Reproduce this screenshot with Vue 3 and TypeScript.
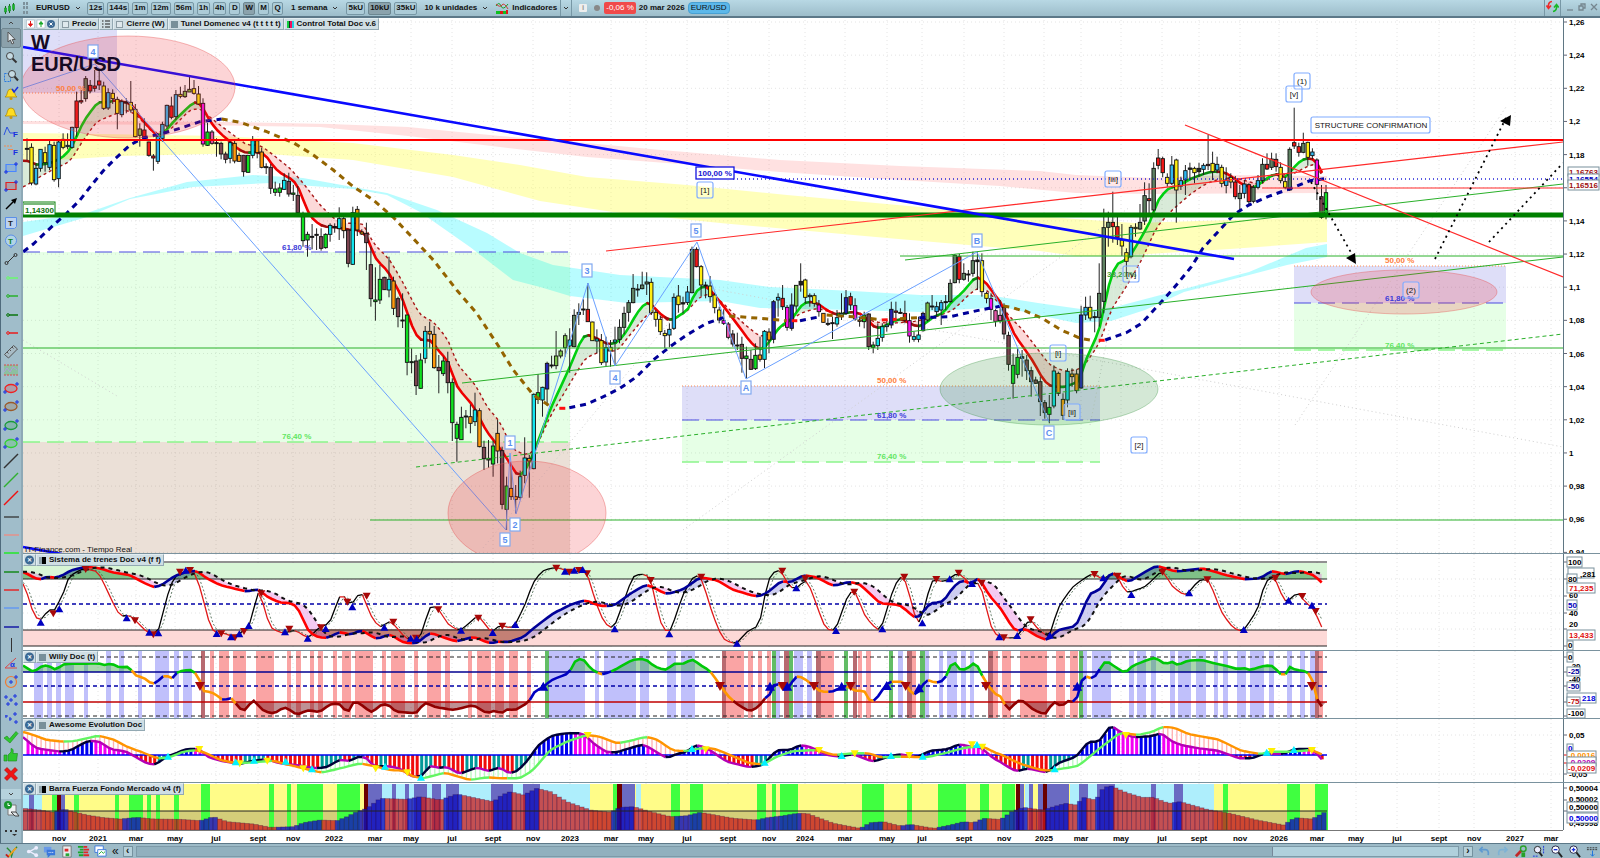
<script setup lang="ts">
type Pt = [number, number]
type Frame = [number, number, number, string]

// Readings are stored per chart sheet: origin x, origin y, horizontal scale, "x y x y ..."
function pts(...frames: Frame[]): Pt[] {
  const out: Pt[] = []
  for (const [ox, oy, sx, raw] of frames) {
    const n = raw.trim().split(/[\s,]+/).map(Number)
    for (let i = 0; i + 1 < n.length; i += 2) out.push([ox + n[i] / sx, oy + n[i + 1] / 3])
  }
  return out.sort((a, b) => a[0] - b[0])
}
const H = 2.613
const STEP = 4.525
const END = 1326

function at(p: Pt[], x: number): number {
  if (x <= p[0][0]) return p[0][1]
  for (let i = 1; i < p.length; i++) {
    if (x <= p[i][0]) {
      const [x0, y0] = p[i - 1]
      const [x1, y1] = p[i]
      return x1 === x0 ? y1 : y0 + ((y1 - y0) * (x - x0)) / (x1 - x0)
    }
  }
  return p[p.length - 1][1]
}
const smooth = (p: Pt[], x: number) => (at(p, x - 3) + at(p, x) * 2 + at(p, x + 3)) / 4
const f = (v: number) => v.toFixed(1)

const xs: number[] = []
for (let x = 23; x <= END; x += STEP) xs.push(x)

interface Run { d: string; c: string }
function runs(p: Pt[], color: (y: number, dy: number) => string): Run[] {
  const out: Run[] = []
  for (let i = 1; i < xs.length; i++) {
    const a = smooth(p, xs[i - 1])
    const b = smooth(p, xs[i])
    const c = color((a + b) / 2, b - a)
    const last = out[out.length - 1]
    if (last && last.c === c) last.d += `L${f(xs[i])} ${f(b)}`
    else out.push({ c, d: `M${f(xs[i - 1])} ${f(a)}L${f(xs[i])} ${f(b)}` })
  }
  return out
}
function between(a: Pt[], b: Pt[], up: string, down: string): Run[] {
  return xs.slice(1).map((x, i) => {
    const p = xs[i]
    const [a0, a1, b0, b1] = [smooth(a, p), smooth(a, x), smooth(b, p), smooth(b, x)]
    return { c: a1 < b1 ? up : down, d: `M${f(p)} ${f(a0)}L${f(x)} ${f(a1)}L${f(x)} ${f(b1)}L${f(p)} ${f(b0)}Z` }
  })
}
const plain = (p: Pt[]) => 'M' + xs.map(x => `${f(x)} ${f(smooth(p, x))}`).join('L')

/* ---------- price candles ---------- */
const tint: Record<string, string> = {
  y: '#ffee10', b: '#2fb8f0', r: '#f01818', g: '#5f8263', l: '#7cc64c', m: '#fb12ee', p: '#e455a8',
  w: '#7c4450', n: '#10e020', c: '#12e4ee', o: '#ff9a0c', d: '#2424b4', k: '#222222',
}
const candleSheets: [number, number, number, string][] = [
  [27, 30, 4.513, `k355 356 325 390;y352 459 340 466;b415 462 400 466;b358 415 358 425;y368 398 350 425;b344 412 330 420;y346 449 335 455;b336 446 330 472;y328 352 310 358;b346 350 310 358;b292 352 290 356;r213 293 185 320;r212 216 180 222;g146 206 138 215;r166 183 150 190;r168 175 120 185;r153 165 118 180;y168 235 155 240;b188 234 175 240;y190 206 178 222;y208 250 200 298;b215 254 208 262;k216 217 205 250;y217 240 153 248;y238 320 222 322;l297 316 280 350;r300 322 265 325;r336 376 335 380;r378 384 372 422;b320 394 312 402;b283 325 275 335;b226 288 224 296;r228 262 200 268;b194 260 180 270;y193 199 170 205;l184 200 165 204;l178 186 140 186;y176 190 150 194;y192 222 168 225;m220 342 205 350;n306 346 278 348;p306 340 300 344;k338 340 325 380;w340 372 335 388;w372 388 365 400;c338 385 328 400;o340 393 328 400;o376 394 368 395;w376 425 378 440;n376 427 376 428;c332 376 318 385;o332 368 332 385;o366 412 353 415;w410 413 400 432;w412 475 402 492;n477 487 455 498;n474 487 460 500;c451 478 430 480;w454 492 428 500;n489 493 465 513;w496 548 468 552`],
  [303, 100, 4.525, `n350 422 335 440;n403 420 395 470;k409 412 372 448;k403 405 385 450;w410 445 385 452;n403 443 400 446;c376 403 370 425;k380 382 370 398;c356 386 322 420;o356 392 345 415;w390 490 390 502;c338 493 320 495;o328 390 318 408;o396 402 388 405;w400 428 368 510;w494 596 440 620;n600 605 502 662;n538 600 495 612;w532 569 530 570;c538 570 470 592;o543 625 530 645;w596 650 590 682;k660 662 580 684;n645 787 645 826;n785 788 745 820;w783 857 765 885;n780 865 760 866;c694 775 678 790;o694 702 665 745;o703 803 678 806;w802 812 765 880;n783 821 770 828;w785 848 755 880;n847 968 835 1023;n973 1015 965 1085;n952 1019 920 1020;k948 950 930 985;o950 970 913 1000;c930 965 878 978;o932 1040 925 1042;w1042 1076 1022 1110;w1075 1080 1020 1103;n1038 1092 1022 1130;o1000 1053 960 1090;w1052 1213 1040 1228;n1158 1228 1130 1290;o1165 1190 1100 1200;o1190 1198 1155 1240;c1130 1192 1112 1200;c1074 1126 1012 1150;o1075 1083 1065 1193;c883 1106 880 1108`],
  [538, 150, 4.53, `n728 748 672 762;c712 750 710 800;d640 717 635 768;k645 647 617 655;l618 647 543 658;l603 618 598 625;l557 593 550 620;c570 588 535 668;g496 590 478 592;g487 493 460 525;k477 480 448 495;r478 515 400 515;y516 572 515 572;c567 573 538 610;y572 638 552 645;c593 636 560 648;y592 603 570 650;c570 576 530 648;g532 568 508 580;g490 532 470 553;g458 487 450 515;g415 458 372 460;k417 418 402 440;g405 416 365 418;g396 402 367 435;y397 488 385 495;y487 508 480 530;y508 545 497 555;y550 557 540 595;b538 555 520 592;b442 535 430 540;y438 464 405 488;k458 462 440 490;b426 458 408 465;g298 428 290 430;r298 350 292 352;y350 405 345 438;k405 408 395 445;y408 440 378 458;y435 473 428 490;y480 510 470 520;m512 520 478 525;p522 562 516 568;w552 582 540 590;w585 588 548 600;w583 625 560 668;n618 626 590 685;w628 658 600 660;n616 656 580 660;o615 628 560 635;c544 628 540 654;o546 570 535 610;d455 568 450 580;b442 450 430 500;r445 470 405 480;m472 532 465 542;d465 535 430 542;l406 468 405 485;k394 405 340 425;y390 442 386 460;b436 440 430 470;y437 460 430 470;m465 485 450 500;o490 517 490 518;k520 522 505 528;k518 520 500 567;c503 522 480 530;b490 500 430 510;d443 490 420 495;r440 465 428 480;m467 507 445 512;o510 514 500 530;n495 515 485 535;w492 590 490 600;n585 592 575 610;c565 587 520 600;c530 562 520 575;b525 530 510 545;d478 525 455 535;r483 487 455 505;k487 488 475 492;r490 510 452 520;m512 558 490 578;c560 568 545 575;c555 568 500 577;d490 542 485 545;l459 510 455 515;k468 470 435 480;b470 485 455 500;b458 480 450 525;k455 457 435 480;g400 455 388 458;g316 398 312 400;r320 388 312 400;g370 388 340 392;k372 374 360 395;g332 370 305 380;k330 335 305 420;y332 425 310 440;y430 445 425 460;m446 478 430 510;p482 514 478 530;p496 512 450 520`],
  [1004, 130, 4.535, `w532 612 520 628;w616 703 605 722;n706 760 670 806;n682 733 655 745;k680 685 660 740;w690 722 675 750;w722 755 710 800;w750 760 740 762;w755 815 740 858;w818 848 810 866;n832 853 795 880;c723 828 706 835;o730 790 725 798;o808 856 790 870;c724 810 715 832;o732 740 715 770;o732 782 718 790;d555 774 527 776;b532 555 500 570;y532 564 497 572;k560 562 545 607;g490 562 400 590;g293 514 236 550;g277 292 245 350;r277 290 185 338;r290 322 252 345;y330 348 282 378;y368 394 355 440;b292 380 285 385;y292 296 280 320;g277 297 222 300;g197 273 157 285;r206 212 160 250;g115 240 97 245;r84 106 57 118;r86 128 80 142;y142 160 130 170;b105 160 78 165;y90 180 86 278;b152 168 140 180;b122 150 105 195;k114 118 98 150;y115 128 110 160;k115 125 98 140;b106 118 100 135;r103 107 14 120;y100 125 65 150;b103 120 80 130;y112 160 104 172;b150 166 112 190;y142 156 130 175;r156 200 138 208;g190 206 165 246;b162 190 150 205;r164 215 160 225;g172 214 165 220;b152 172 135 178;g103 152 85 160;r103 117 70 120;g87 112 68 120;r88 110 70 125;y112 152 97 160;y155 172 140 178;g58 180 52 183;r38 48 -67 57;r50 67 38 80;g40 67 8 70;y37 82 35 107;b66 77 55 88;m90 163 85 210;w200 262 165 266;n188 258 165 268`],
]
const candles = candleSheets.flatMap(([x0, y0, step, raw]) =>
  raw.split(';').map((s, i) => {
    const n = s.slice(1).split(' ').map(Number)
    return { x: x0 + i * step, top: y0 + n[0] / 3, bottom: y0 + n[1] / 3, high: y0 + n[2] / 3, low: y0 + n[3] / 3, fill: tint[s[0]] }
  }),
)

/* ---------- averages ---------- */
const fast = pts(
  [20, 30, 3, '10 392 25 392 50 405 90 400 128 382 150 360 165 330 190 275 215 240 235 215 260 218 285 210 320 218 335 222 360 262 385 290 400 305 414 320 440 300 460 275 490 245 520 218 535 215 550 235 570 275 600 310 625 330 650 355 680 370 700 365 735 372 760 410 785 432 820 450 840 480 860 540'],
  [20, 100, 3, '880 360 910 380 950 382 990 390 1010 388 1040 405 1065 475 1105 515 1145 590 1180 690 1200 722 1230 718 1250 745 1285 785 1310 860 1360 918 1400 995 1440 1045 1470 1090 1490 1125 1500 1127 1515 1115 1530 1080 1555 1020'],
  [520, 150, 3, '45 905 90 780 150 650 185 565 200 553 225 562 260 582 290 580 320 545 350 490 370 465 385 455 400 470 430 500 455 512 480 495 505 480 520 435 540 412 560 408 575 425 600 455 650 520 690 575 715 598 730 597 745 580 775 535 800 515 820 505 835 475 860 455 890 458 920 480 950 495 1000 485 1030 495 1060 530 1080 535 1100 525 1140 505 1160 515 1190 530 1210 525 1240 500 1270 490 1290 460 1330 425 1350 400 1370 378 1400 400 1437 452'],
  [1000, 130, H, '0 510 20 565 35 610 60 650 90 700 110 745 130 768 165 772 195 760 210 750 220 700 240 650 262 595 275 510 290 440 305 400 330 390 345 370 370 320 395 270 412 210 440 175 470 165 500 145 550 125 580 125 600 135 635 165 665 175 690 150 720 130 745 145 765 115 790 88 815 84 830 100 850 148'],
)
const slow = pts(
  [20, 30, 3, '10 472 60 440 100 418 150 395 190 330 230 275 270 258 320 240 350 255 400 310 450 300 480 270 510 240 540 235 580 270 620 300 680 345 720 345 760 375 810 415 850 460 900 525'],
  [20, 100, 3, '925 340 960 370 1030 370 1060 430 1110 480 1150 550 1200 645 1240 665 1285 720 1310 790 1370 860 1400 920 1440 965 1460 1010 1480 1050 1520 1065 1545 1050'],
  [520, 150, 3, '40 905 90 800 150 700 195 625 250 600 290 605 350 530 390 485 450 515 500 485 540 440 575 430 620 470 670 520 720 560 760 550 800 520 840 490 890 475 950 490 1000 485 1060 515 1110 520 1180 515 1250 500 1300 480 1340 440 1375 412 1400 420 1437 460'],
  [1000, 130, H, '0 520 25 560 60 600 100 660 130 705 170 725 215 715 260 640 290 540 330 470 370 390 410 290 450 240 500 190 540 160 580 145 620 145 680 165 720 130 760 135 820 100 850 150'],
)
const fastRuns = runs(fast, (_, dy) => (dy < -2.2 ? '#00d010' : dy < 0 ? '#088a10' : dy > 2.2 ? '#ee0000' : '#a00c0c'))
const fastFill = between(fast, slow, 'rgba(60,150,60,.2)', 'rgba(240,60,60,.2)')
const slowPath = plain(slow)

const longAvg: { c: string; p: Pt[] }[] = [
  { c: '#000098', p: pts([20, 100, 3, '10 455 40 432 90 385 140 340 180 300 215 255 250 212 290 172 330 135 370 114 430 100 480 85 540 65 605 57']) },
  { c: '#946400', p: pts([20, 100, 3, '605 57 660 67 740 95 820 128 880 165 940 210 1000 260 1060 300 1120 352 1170 405 1240 480 1310 570 1370 640 1430 730 1480 810 1540 885'], [520, 150, 3, '50 742 95 772']) },
  { c: '#ff1010', p: pts([520, 150, 3, '118 775 140 775']) },
  { c: '#000098', p: pts([520, 150, 3, '148 773 200 762 240 745 300 715 350 680 400 630 450 590 500 555 560 520 610 503']) },
  { c: '#946400', p: pts([520, 150, 3, '628 498 720 505 800 512']) },
  { c: '#ff1010', p: pts([520, 150, 3, '815 512 832 512']) },
  { c: '#000098', p: pts([520, 150, 3, '840 512 900 500']) },
  { c: '#946400', p: pts([520, 150, 3, '920 495 1000 500 1070 508']) },
  { c: '#ff1010', p: pts([520, 150, 3, '1085 510 1130 508']) },
  { c: '#946400', p: pts([520, 150, 3, '1140 506 1195 503']) },
  { c: '#000098', p: pts([520, 150, 3, '1198 503 1290 500 1380 480 1445 468']) },
  { c: '#946400', p: pts([520, 150, 3, '1450 468 1500 480'], [1000, 130, H, '30 532 60 540 110 565 160 600 210 625 245 632']) },
  { c: '#ff1010', p: pts([1000, 130, H, '258 631 274 631']) },
  { c: '#000098', p: pts([1000, 130, H, '275 630 330 608 370 580 410 530 450 480 500 410 530 355 570 305 610 255 650 225 700 200 760 175 810 152 850 146']) },
]
const poly = (p: Pt[]) => p.map(q => `${f(q[0])},${f(q[1])}`).join(' ')

const bands = [
  { c: 'rgba(255,120,120,.22)', p: '23,121 230,122 330,124 408,127 500,136 587,143 650,149 780,160 900,166 1040,171 1076,175 1153,178 1230,175 1327,176 1327,193 1153,194 1076,193 1000,186 900,180 780,172 693,165 587,157 500,147 408,136 320,127 200,125 23,124' },
  { c: 'rgba(255,255,90,.42)', p: '23,133 100,134 220,136 353,143 453,155 520,165 587,177 687,185 787,195 953,210 1076,219 1134,223 1327,217 1327,242 1230,249 1115,256 1076,256 1040,251 887,238 720,223 613,212 540,201 453,177 353,160 253,153 120,156 23,162' },
  { c: 'rgba(0,245,255,.28)', p: '23,222 87,213 130,198 187,182 253,175 303,178 353,187 387,193 437,210 487,233 520,253 553,265 620,275 720,280 770,287 853,291 920,295 987,295 1038,303 1088,310 1115,307 1153,297 1199,285 1249,272 1306,248 1327,244 1327,257 1287,265 1230,280 1184,292 1145,310 1111,321 1076,323 1038,315 1003,307 920,312 853,310 760,308 720,301 627,303 570,296 540,287 513,280 470,247 420,212 387,195 353,189 270,183 193,187 130,199 87,217 23,236' },
]

interface Label { t: string; x: number; y: number }
const waves: Label[] = [
  { t: '4', x: 93, y: 52 }, { t: '1', x: 510, y: 443 }, { t: '5', x: 505, y: 540 }, { t: '2', x: 515, y: 525 },
  { t: '3', x: 587, y: 271 }, { t: '4', x: 615, y: 378 }, { t: '5', x: 696, y: 231 }, { t: 'A', x: 746, y: 388 },
  { t: 'B', x: 977, y: 241 }, { t: 'C', x: 1049, y: 433 },
]
const degrees: Label[] = [
  { t: '[1]', x: 705, y: 190 }, { t: '[2]', x: 1139, y: 445 }, { t: '[i]', x: 1058, y: 353 }, { t: '[ii]', x: 1072, y: 412 },
  { t: '[iii]', x: 1113, y: 179 }, { t: '[iv]', x: 1131, y: 274 }, { t: '(1)', x: 1302, y: 81 }, { t: '[v]', x: 1294, y: 94 },
  { t: '(2)', x: 1411, y: 290 },
]
const gridX: [number, string][] = [
  [59, 'nov'], [98, '2021'], [136, 'mar'], [175, 'may'], [216, 'jul'], [258, 'sept'], [293, 'nov'], [334, '2022'], [375, 'mar'],
  [411, 'may'], [452, 'jul'], [493, 'sept'], [533, 'nov'], [570, '2023'], [611, 'mar'], [646, 'may'], [687, 'jul'], [728, 'sept'],
  [769, 'nov'], [805, '2024'], [845, 'mar'], [887, 'may'], [922, 'jul'], [964, 'sept'], [1004, 'nov'], [1044, '2025'], [1081, 'mar'],
  [1121, 'may'], [1162, 'jul'], [1199, 'sept'], [1240, 'nov'], [1279, '2026'], [1317, 'mar'], [1356, 'may'], [1397, 'jul'],
  [1439, 'sept'], [1474, 'nov'], [1515, '2027'], [1551, 'mar'],
]
const prices = ['1,26', '1,24', '1,22', '1,2', '1,18', '1,16', '1,14', '1,12', '1,1', '1,08', '1,06', '1,04', '1,02', '1', '0,98', '0,96', '0,94']
const priceY = (i: number) => 22 + i * 33.15

/* ---------- Sistema de trenes ---------- */
const train = pts(
  [20, 550, 3, '10 65 40 82 60 90 85 78 100 85 130 75 155 60 200 50 240 55 280 68 330 75 370 98 405 113 430 102 460 80 500 65 530 62 560 85 600 105 640 115 680 125 715 117 740 140 780 158 820 160 840 185 865 245 890 260 920 265 960 245 990 255 1025 240 1070 268 1110 252 1150 278 1190 280 1230 248 1270 262 1310 275 1360 260 1410 280 1440 274'],
  [500, 550, 3, '10 277 30 275 70 262 100 235 160 190 210 165 255 150 300 168 340 168 400 125 440 103 500 133 550 118 600 82 650 90 700 120 770 140 800 130 845 92 870 98 910 75 950 82 1000 108 1050 95 1080 103 1140 160 1200 165 1250 208 1290 160 1330 155 1360 110 1390 88 1410 105 1435 80 1470 140 1498 170'],
  [1000, 550, H, '0 172 40 245 65 235 95 258 125 272 150 240 200 228 235 128 260 122 290 65 335 97 380 65 410 47 460 65 530 55 590 75 640 88 680 85 710 62 745 73 780 62 820 75 850 108'],
)
const trainLag: Pt[] = xs.map(x => [x, (at(train, x - 6) + at(train, x - 12) + at(train, x - 18)) / 3] as Pt)
const trainRuns = runs(train, (_, dy) => (dy < 0 ? '#000098' : '#ff0000'))
const trainFill = between(train, trainLag, 'rgba(60,60,200,.25)', 'rgba(220,80,210,.3)')
const over = (p: Pt[], level: number, above: boolean) =>
  `M23 ${level}` + xs.map(x => `L${f(x)} ${f(above ? Math.min(smooth(p, x), level) : Math.max(smooth(p, x), level))}`).join('') + `L${END} ${level}Z`
const trainHigh = over(train, 579, true)
const trainLow = over(train, 629, false)
const osc = pts(
  [20, 550, 3, '10 95 25 140 40 195 62 215 90 170 100 195 118 150 130 135 145 80 190 55 235 65 270 140 300 200 330 195 350 215 385 250 415 250 440 140 465 75 520 60 540 110 570 230 590 252 610 248 640 262 690 230 715 110 750 235 790 250 825 240 865 265 900 230 930 220 960 132 970 132 990 170 1025 120 1050 195 1080 235 1110 210 1160 268 1200 268 1230 165 1255 175 1285 225 1320 243 1375 195 1415 250 1440 222'],
  [500, 550, 3, '5 228 40 235 75 165 100 95 130 60 170 52 210 65 260 62 285 150 310 215 340 240 380 130 400 75 440 72 455 95 480 220 508 255 550 130 585 72 605 85 640 200 670 270 710 282 740 245 780 225 800 100 820 65 845 60 860 100 885 120 920 85 950 165 975 235 1005 245 1045 130 1065 120 1095 200 1140 248 1175 130 1200 75 1215 85 1255 235 1280 150 1295 85 1330 97 1375 68 1415 105 1440 95 1475 240 1498 262'],
  [1000, 550, H, '2 262 40 265 80 205 100 240 130 262 150 175 190 110 240 70 270 88 300 65 330 130 380 110 425 60 450 110 485 138 520 90 545 88 580 190 610 235 635 245 675 175 690 100 715 75 745 160 780 125 795 155 820 175 835 220 850 252'],
)
const oscLag: Pt[] = xs.map(x => [x, (at(osc, x - 2) + at(osc, x - 4)) / 2] as Pt)
const oscRuns = runs(osc, (_, dy) => (dy < 0 ? '#000000' : '#e01818'))
const oscLagPath = plain(oscLag)
const trainLagPath = plain(trainLag)
const tri = (p: Pt[], up: boolean, r = 4) =>
  p.map(([x, y]) => (up ? `M${f(x - r)} ${f(y + r - 1)}h${2 * r}l${-r} ${-2 * r + 1}z` : `M${f(x - r)} ${f(y - r + 1)}h${2 * r}l${-r} ${2 * r - 1}z`)).join('')
const trainUp = tri(pts(
  [20, 550, 3, '62 218 118 178 320 205 388 248 415 250 497 62 590 252 633 262 658 253 686 228 795 247 863 266 917 237 997 172 1093 233 1172 266 1190 268 1323 242 1418 249 1486 225'],
  [500, 550, 3, '195 65 223 62 248 60 344 238 508 253 711 281 889 115 1008 243 1147 238 1267 220 1349 88 1416 102 1498 262'],
  [1000, 550, H, '45 258 130 257 270 85 343 135 494 130 637 240 754 152 815 167']), true)
const trainDown = tri(pts(
  [20, 550, 3, '100 190 197 57 345 211 400 253 480 65 510 60 604 250 645 262 672 243 724 130 808 236 903 232 982 155 1040 137 1120 215 1188 263 1255 178 1375 203 1447 227'],
  [500, 550, 3, '169 53 208 65 237 60 261 70 452 90 604 80 847 62 916 85 1063 125 1213 80 1309 87 1376 68 1445 98'],
  [1000, 550, H, '10 262 80 208 247 72 307 77 425 65 542 88 720 83 790 138 825 183']), false)

/* ---------- Willy ---------- */
interface Stripe { x: number; w: number; c: string }
function stripes(map: Record<string, string>, ...frames: [number, number, string][]): Stripe[] {
  return frames.flatMap(([ox, sx, raw]) =>
    raw.split(' ').map(s => {
      const [a, b] = s.slice(1).split('-').map(Number)
      return { x: Math.round(ox + a / sx), w: Math.round((b - a) / sx), c: map[s[0]] }
    }))
}
const willyStripes = stripes({ b: '#c0c0fb', r: '#faa4a4', d: '#b86a70', g: '#62bd66' },
  [20, 3, 'b42-68 b80-95 b108-122 b135-162 b192-205 b258-272 b298-312 b354-366 b405-447 b462-476 b489-516 d543-555 r570-582 r598-627 r639-678 r707-762 r801-814 r827-841 r870-882 r894-908 r938-951 r965-993 r1006-1059 r1086-1098 r1113-1155 r1181-1194 r1221-1263 r1275-1290 r1344-1357 r1371-1413 r1426-1452 r1467-1494'],
  [500, 3, 'r27-54 r81-93 g134-147 b148-255 b285-298 b311-406 b420-447 b501-528 b543-585 d666-678 r679-732 r745-759 r774-786 r801-814 g815-827 b828-840 d852-867 g868-881 b882-909 b922-936 d948-962 r963-1002 g1032-1044 d1059-1072 r1073-1084 r1098-1113 g1167-1179 b1194-1208 d1221-1235 r1236-1248 g1260-1275 b1276-1287 b1316-1328 b1341-1371 b1384-1398 b1411-1422 d1464-1478 r1479-1493'],
  [1000, H, 'r5-29 r52-123 r147-170 r183-205 g206-217 b218-229 b241-290 b336-348 b359-383 b395-407 b443-455 b466-501 b512-537 b560-571 b584-596 b619-643 b654-690 b702-714 b750-762 b785-797 b809-821 d822-833 r834-845'])
const willy = pts(
  [20, 550, 3, '10 345 38 368 70 345 90 348 105 362 130 342 240 340 255 348 270 338 295 352 330 350 345 378 370 382 400 405 440 370 455 395 470 365 515 358 540 385 550 435 565 422 590 435 612 455 632 438 650 465 672 488 700 445 725 480 760 492 795 470 830 495 865 480 900 487 930 462 960 460 985 495 1000 450 1030 468 1055 490 1080 465 1105 462 1125 485 1190 490 1215 455 1240 470 1300 480 1360 465 1400 490 1430 480'],
  [500, 550, 3, '5 495 20 475 45 482 70 465 90 455 100 425 130 412 150 392 210 368 225 330 250 325 270 355 305 375 340 362 400 328 440 328 460 348 500 362 520 340 555 342 575 325 605 348 630 362 660 405 685 440 715 465 750 485 780 468 795 440 808 445 820 400 835 398 855 430 890 375 920 390 960 425 1000 425 1035 405 1070 425 1095 418 1108 458 1125 452 1165 395 1215 395 1235 435 1255 430 1280 385 1305 400 1335 390 1360 325 1378 362 1405 355 1425 332 1450 385 1490 440'],
  [1000, 550, H, '0 430 22 487 45 450 60 452 85 478 120 495 140 450 160 472 180 448 200 462 215 375 245 388 275 330 300 350 328 370 345 348 385 330 405 322 435 345 450 330 460 348 490 332 530 330 560 340 600 350 620 358 640 352 650 362 680 350 710 345 745 385 757 340 770 362 790 360 815 375 835 485 850 455'],
)
const willyRuns = runs(willy, (y, dy) => (y < 672 ? '#00c808' : y > 701 ? '#900000' : dy < 0 ? '#0000c0' : '#ff9800'))
const willyHigh = over(willy, 672, true)
const willyLow = over(willy, 702, false)
const willyDown = tri(pts([20, 550, 3, '540 408'], [500, 550, 3, '660 408 848 408 942 408 1052 408 1217 408 1458 408'], [1000, 550, H, '815 408']), false, 5)
const willyUp = tri(pts([500, 550, 3, '130 410 810 410 862 410 1025 410 1160 408 1257 415'], [1000, 550, H, '202 410']), true, 5)

/* ---------- Awesome Evolution ---------- */
const macd = pts(
  [20, 550, 3, '10 560 30 580 50 595 120 605 150 602 180 585 205 572 240 575 270 597 320 605 345 620 380 640 405 645 440 620 500 597 540 597 560 620 600 632 660 642 700 632 740 628 780 640 850 648 880 655 920 652 960 628 990 635 1010 620 1040 622 1060 650 1100 648 1140 655 1175 680 1205 680 1230 645 1255 655 1280 650 1320 672 1370 652 1410 665 1430 652'],
  [500, 550, 3, '5 655 25 670 50 665 80 635 115 585 155 557 195 550 250 550 280 580 320 607 350 607 380 597 430 583 460 600 500 625 530 612 560 605 590 583 630 600 680 635 750 652 790 645 830 600 870 600 900 585 930 590 980 615 1020 620 1060 612 1090 625 1120 635 1160 622 1200 612 1250 622 1290 602 1340 598 1380 582 1410 590 1440 590 1480 625'],
  [1000, 550, H, '0 635 20 650 45 665 70 655 125 668 150 640 200 620 230 575 260 575 288 525 320 550 350 562 400 558 420 548 450 575 480 587 520 595 570 602 625 625 660 625 690 610 740 612 770 597 820 597 835 625 850 635'],
)
const sig = pts(
  [20, 550, 3, '10 545 40 555 80 570 130 575 165 573 235 557 280 568 320 590 370 608 410 625 445 623 490 605 530 600 560 610 600 630 650 640 700 637 760 632 800 643 850 655 905 668 960 655 1020 640 1060 648 1110 660 1150 662 1180 680 1210 685 1275 668 1350 690 1400 682'],
  [500, 550, 3, '5 685 60 685 100 660 150 600 200 575 260 555 300 560 350 580 380 575 440 560 470 568 520 602 560 603 600 595 640 595 690 615 750 640 790 643 830 620 880 603 950 600 1000 615 1060 610 1110 610 1140 622 1200 620 1280 622 1340 608 1400 592 1450 590 1490 610'],
  [1000, 550, H, '2 613 50 640 100 658 130 662 205 648 260 595 315 548 360 555 400 545 425 530 455 533 495 553 570 568 630 602 680 612 710 605 760 605 815 600 850 618'],
)
const ZERO = 755
const macdRuns = runs(macd, (_, dy) => (dy <= 0 ? '#000038' : '#b400b4'))
const sigRuns = runs(sig, (_, dy) => (dy <= 0 ? '#62f562' : '#ff9400'))
const histo = xs.slice(1).map((x, i) => {
  const y = smooth(macd, x)
  const rising = y < smooth(macd, xs[i])
  const c = y < ZERO ? (rising ? '#0000f0' : '#f400f4') : rising ? '#009898' : '#f00c0c'
  return { x: x - 1, y: Math.min(y, ZERO), h: Math.abs(y - ZERO), c }
})
const hatch = xs.map(x => ({ x, y1: smooth(macd, x), y2: smooth(sig, x) }))
const awDown = tri(pts([20, 550, 3, '538 597 659 640 742 632 850 655 1067 655 1162 667'], [500, 550, 3, '263 555 617 598 957 600 1064 610 1228 615 1416 583 1447 590'], [1000, 550, H, '329 555 710 603 815 600']), false, 4)
const awUp = tri(pts([20, 550, 3, '444 620 647 637 702 632 797 635 876 658 1095 650 1203 683'], [500, 550, 3, '576 597 794 638 1025 618 1173 618 1268 620 1431 585'], [1000, 550, H, '143 658 697 608 768 600']), true, 4)

/* ---------- Barra Fuerza ---------- */
const fondo = stripes({ c: '#aeeefc', b: '#6a6ac2', g: '#40ff40', d: '#6a0000' },
  [20, 3, 'c10-68 b27-42 g96-110 d111-123 b124-135 g162-177 g285-298 g327-369 g381-393 g408-420 g462-477 g543-571 g747-762 g801-814 g831-909 g951-1020 d1032-1044 c1044-1710 b1044-1086 b1116-1128 b1155-1167 b1182-1221 b1236-1263 b1278-1317 b1413-1479'],
  [500, 3, 'b69-120 g339-351 d352-366 b366-406 c407-422 g513-540 g570-609 g771-799 g815-827 g840-894 g1086-1152 g1221-1236 g1314-1398 g1440-1466'],
  [1000, H, 'g5-40 d41-52 b53-64 c65-76 b77-88 b99-111 d112-123 b124-182 c183-560 b206-230 b254-301 b395-407 b455-478 g584-596 g750-784 g822-857'])
const force = pts(
  [20, 550, 3, '10 775 60 780 100 787 130 777 160 785 200 795 250 803 300 807 350 802 400 807 480 808 540 812 580 800 620 815 700 822 750 832 820 830 850 818 900 810 950 812 980 800 1010 785 1040 775 1080 745 1160 748 1200 740 1260 750 1310 732 1370 745 1420 755'],
  [500, 550, 3, '5 735 30 725 70 735 110 715 150 725 200 755 270 780 330 787 360 772 400 770 450 785 510 800 560 797 600 787 700 805 770 810 800 803 850 797 890 790 920 790 1000 820 1080 835 1110 818 1150 815 1200 828 1230 823 1300 835 1350 825 1390 815 1420 818 1450 805 1498 808'],
  [1000, 550, H, '4 806 30 785 60 772 110 780 170 760 200 765 215 742 250 750 270 712 290 708 330 728 370 742 400 742 440 760 470 755 540 778 600 790 670 810 740 825 770 803 815 807 850 785'],
)
const forceBars = xs.map(x => {
  const y = at(force, x + 2)
  return { x, y, c: y < at(force, x - 2.5) ? 'rgba(16,16,190,.8)' : 'rgba(204,24,24,.74)' }
})

/* ---------- chrome ---------- */
const frames1 = ['12s', '144s', '1m', '12m', '56m', '1h', '4h', 'D', 'W', 'M', 'Q']
const frames2 = ['5kU', '10kU', '35kU']
const tools: { n: string; k: string; c?: string }[] = [
  { n: 'Cursor', k: 'cursor' }, { n: 'Zoom', k: 'mag' }, { n: 'Zoom area', k: 'magbox' }, { n: 'Alerta precio', k: 'bell2' }, { n: 'Alerta', k: 'bell' },
  { n: 'Fibonacci', k: 'abf' }, { n: 'Retroceso', k: 'fib' }, { n: 'Rectángulo azul', k: 'rect', c: '#4a86ff' }, { n: 'Rectángulo rojo', k: 'rect', c: '#e02020' },
  { n: 'Flecha', k: 'arrow' }, { n: 'Texto', k: 'text' }, { n: 'Nota', k: 'note' }, { n: 'Segmento', k: 'seg' },
  { n: 'Horizontal 1', k: 'ray', c: '#66ff66' }, { n: 'Horizontal 2', k: 'ray', c: '#20b020' }, { n: 'Horizontal 3', k: 'ray', c: '#007000' }, { n: 'Horizontal 4', k: 'ray', c: '#f01010' },
  { n: 'Regla', k: 'ruler' }, { n: 'Canal', k: 'wave' },
  { n: 'Elipse roja', k: 'ell', c: '#f02020' }, { n: 'Elipse marrón', k: 'ell', c: '#9a5a2a' }, { n: 'Elipse verde', k: 'ell', c: '#1a9a3a' }, { n: 'Elipse clara', k: 'ell', c: '#30d030' },
  { n: 'Recta negra', k: 'diag', c: '#333333' }, { n: 'Recta verde', k: 'diag', c: '#30b030' }, { n: 'Recta roja', k: 'diag', c: '#f01010' },
  { n: 'Nivel negro', k: 'hl', c: '#333333' }, { n: 'Nivel salmón', k: 'hl', c: '#f08a80' }, { n: 'Nivel lima', k: 'hl', c: '#10f010' }, { n: 'Nivel verde', k: 'hl', c: '#008000' },
  { n: 'Nivel rojo', k: 'hl', c: '#f01010' }, { n: 'Nivel celeste', k: 'hl', c: '#5c94f8' }, { n: 'Nivel azul', k: 'hl', c: '#0000a0' },
  { n: 'Vertical', k: 'vl' }, { n: 'Ángulo', k: 'angle' }, { n: 'Ciclo', k: 'cycle' }, { n: 'Impulso', k: 'imp' }, { n: 'Corrección', k: 'abc' },
  { n: 'Validar', k: 'check' }, { n: 'Me gusta', k: 'thumb' }, { n: 'Borrar', k: 'cross' },
]
</script>

<template>
  <div class="app">
    <header class="bar">
      <button class="flat" aria-label="Gráfico">
        <svg width="13" height="13" viewBox="0 0 13 13"><path d="M2.5 4v8M6.500 2v9M10.500 1v8" stroke="#1a6a22" /><path d="M1.500 6h2v4h-2zM5.500 4h2v5h-2zM9.500 2.500h2v5h-2z" fill="#18b828" stroke="#0a8a1c" stroke-width=".5" /></svg>
      </button>
      <svg class="grip" width="7" height="14" viewBox="0 0 7 14"><path d="M1 1h2v3H1zM4 1h2v3H4zM1 5h2v3H1zM4 5h2v3H4zM1 10h2v3H1zM4 10h2v3H4z" fill="#7d929c" /></svg>
      <button class="drop symbol">EURUSD<svg class="chev" viewBox="0 0 6 4"><path d="M1 1l2 2 2-2" /></svg></button>
      <div class="group"><button v-for="t in frames1" :key="t" class="pill" :class="{ on: t === 'W' }">{{ t }}</button></div>
      <button class="drop week">1 semana<svg class="chev" viewBox="0 0 6 4"><path d="M1 1l2 2 2-2" /></svg></button>
      <div class="group"><button v-for="t in frames2" :key="t" class="pill" :class="{ on: t === '10kU' }">{{ t }}</button></div>
      <button class="drop units">10 k unidades<svg class="chev" viewBox="0 0 6 4"><path d="M1 1l2 2 2-2" /></svg></button>
      <button class="flat ind">
        <svg width="14" height="14" viewBox="0 0 14 14"><path d="M1 5q3-5 5 0t7-2" fill="none" stroke="#18a028" /><path d="M1 3q4 4 6 1t6 4" fill="none" stroke="#d03838" /><path d="M1 10h12v3H1z" fill="#10c020" /><path d="M5 10h3v3H5zM11 9h2v4h-2z" fill="#e01818" /></svg>
        Indicadores
      </button>
      <button class="split" aria-label="Más indicadores"><svg class="chev" viewBox="0 0 6 4"><path d="M1 1l2 2 2-2" /></svg></button>
      <span class="info">i</span>
      <span class="dot"></span>
      <span class="chg">-0,06 %</span>
      <span class="date">20 mar 2026</span>
      <span class="pair">EUR/USD</span>
      <span class="grow"></span>
      <button class="sync" aria-label="Sincronizar">
        <svg width="13" height="13" viewBox="0 0 13 13"><path d="M6 1.500Q2 2 2.500 7M0.500 5.500l2 3 2.500-3" fill="none" stroke="#ee2a2a" stroke-width="1.600" /><path d="M7 11.500q4-.5 3.500-5.500M8 7.500l2.500-3 2.200 3" fill="none" stroke="#18b828" stroke-width="1.600" /></svg>
      </button>
      <button class="win" aria-label="Minimizar"><svg width="8" height="8" viewBox="0 0 8 8"><path d="M1 7h6" /></svg></button>
      <button class="win" aria-label="Restaurar"><svg width="8" height="8" viewBox="0 0 8 8"><path d="M1 3h4v4H1zM3 3V1h4v4H5" fill="none" /></svg></button>
      <button class="win" aria-label="Cerrar"><svg width="8" height="8" viewBox="0 0 8 8"><path d="M1 1l6 6M7 1L1 7" /></svg></button>
    </header>

    <div class="work">
      <aside class="tools">
        <button class="fold" aria-label="Subir"><svg viewBox="0 0 6 4"><path d="M1 3l2-2 2 2" /></svg></button>
        <div class="stack">
          <button v-for="t in tools" :key="t.n" class="tool" :class="{ on: t.k === 'cursor' }" :aria-label="t.n">
            <svg width="16" height="16" viewBox="0 0 16 16" fill="none">
              <path v-if="t.k === 'cursor'" d="M5 2v10l2.400-2 1.600 4 1.800-.8L9.200 9.500h3z" fill="#dfe6ea" stroke="#555" />
              <template v-else-if="t.k === 'mag' || t.k === 'magbox'">
                <path v-if="t.k === 'magbox'" d="M1.500 5.500h6v8h-6z" stroke="#2a7ae0" stroke-dasharray="2 1" />
                <circle :cx="t.k === 'mag' ? 7 : 9" cy="6" r="3.500" fill="#c5dbe3" stroke="#444" /><path :d="t.k === 'mag' ? 'M9.500 8.500l4 4' : 'M11.500 8.500l3.500 4'" stroke="#333" stroke-width="2" />
              </template>
              <template v-else-if="t.k === 'bell' || t.k === 'bell2'">
                <path d="M2 11q2-1 2.500-5Q5 3 8 3t3.500 3q.5 4 2.500 5z" fill="#ffdc20" stroke="#a88400" stroke-width=".7" /><circle cx="8" cy="12.500" r="1.500" fill="#c89a10" />
                <path v-if="t.k === 'bell2'" d="M9 3l2 3 4-5" stroke="#1830e0" stroke-width="1.500" />
              </template>
              <template v-else-if="t.k === 'abf' || t.k === 'fib'">
                <path v-if="t.k === 'abf'" d="M1 12l3-8 3 6h4" stroke="#2a50e0" /><path v-else d="M1 5h9" stroke="#f08a50" stroke-dasharray="2 1" />
                <path v-if="t.k === 'fib'" d="M5 8.500h5" stroke="#f08a50" />
                <text x="10" y="14" class="tiny" fill="#1830e0">F</text>
              </template>
              <template v-else-if="t.k === 'rect'"><path d="M3 4.500h10v7H3z" :stroke="t.c" :fill="t.c" fill-opacity=".2" stroke-width="1.200" /><path d="M1 12h4M3 10v4M11 4h4M13 2v4" stroke="#1830e0" /></template>
              <template v-else-if="t.k === 'arrow'"><path d="M3 13L10 6" stroke="#000" stroke-width="1.500" /><path d="M8 4l6-2-2 6z" fill="#000" /></template>
              <template v-else-if="t.k === 'text'"><path d="M2.500 2.500h11v9l-2 2h-9z" fill="#bcd2ee" stroke="#5b8fe8" /><text x="5" y="11" class="tiny" fill="#222">T</text></template>
              <template v-else-if="t.k === 'note'"><circle cx="8" cy="7.500" r="5.500" fill="#b2d4e4" stroke="#5b8fe8" /><path d="M6 12l2 3 2-3" stroke="#5b8fe8" /><text x="5" y="11" class="tiny" fill="#0a8020">T</text></template>
              <template v-else-if="t.k === 'seg'"><path d="M4.500 11.500l7-7" stroke="#333" /><circle cx="3.500" cy="12" r="1.500" stroke="#333" /><circle cx="12.500" cy="4" r="1.500" stroke="#333" /></template>
              <template v-else-if="t.k === 'ray'"><path d="M6 8h9" :stroke="t.c" stroke-width="1.400" /><circle cx="5" cy="8" r="1.300" :stroke="t.c" /></template>
              <path v-else-if="t.k === 'ruler'" d="M1.500 11.500l9-9 4 3.500-9 9zM4 9l1.500 1.500M6.500 6.500L8 8M9 4l1.500 1.500" stroke="#555" fill="#a8bcc6" />
              <template v-else-if="t.k === 'wave'"><path d="M1 3h14v10H1z" fill="#8cc0a0" /><path d="M1 3h14M1 13h14" stroke="#e04848" stroke-dasharray="2 1" /><path d="M1 10l3-4 3 4 3-5 4 3" stroke="#b09ae0" /></template>
              <template v-else-if="t.k === 'ell'"><ellipse cx="8" cy="8.500" rx="6" ry="4" :stroke="t.c" :fill="t.c" fill-opacity=".2" stroke-width="1.300" /><path d="M0 12h4M2 10v4M12 4h4M14 2v4" stroke="#1830e0" /></template>
              <path v-else-if="t.k === 'diag'" d="M1 15L15 1" :stroke="t.c" stroke-width="1.400" />
              <path v-else-if="t.k === 'hl'" d="M1 8h15" :stroke="t.c" stroke-width="1.300" />
              <path v-else-if="t.k === 'vl'" d="M8.500 1v14" stroke="#333" />
              <template v-else-if="t.k === 'angle'"><path d="M13 3L2 13h12" stroke="#d84a4a" /><text x="7" y="12" class="tiny" fill="#1830e0">α</text></template>
              <template v-else-if="t.k === 'cycle'"><circle cx="8" cy="8" r="5.500" stroke="#f07a30" stroke-width="1.200" /><path d="M6 8h4M8 6v4M11 3h4M13 1v4" stroke="#1830e0" /></template>
              <path v-else-if="t.k === 'imp'" d="M1 5h4M3 3v4M6 8h4M8 6v4M10 4h4M12 2v4M3 12h4M5 10v4M11 12h4M13 10v4" stroke="#1830e0" />
              <path v-else-if="t.k === 'abc'" d="M2 6h3M3 5v3M6 9h3M7 7v4M10 4h4M12 2v4M11 12h4M13 10v4" stroke="#1830e0" />
              <path v-else-if="t.k === 'check'" d="M1 9l3-2 2.500 3L13 2.500l2 2L7 14z" fill="#30c830" stroke="#188a18" stroke-width=".6" />
              <path v-else-if="t.k === 'thumb'" d="M1 8h3v6H1zM5 8l3-3V1.500q3 0 2 5h4.500l-1 7.500H5z" fill="#30c830" stroke="#188a18" stroke-width=".6" />
              <path v-else-if="t.k === 'cross'" d="M1.500 4L4 1.500l4 4 4-4L14.500 4l-4 4 4 4-2.500 2.500-4-4-4 4L1.500 12l4-4z" fill="#f01414" stroke="#a00" stroke-width=".6" />
            </svg>
          </button>
        </div>
        <button class="fold low" aria-label="Bajar"><svg viewBox="0 0 6 4"><path d="M1 1l2 2 2-2" /></svg></button>
        <button class="tool big" aria-label="Historial"><svg width="18" height="20" viewBox="0 0 18 20" fill="none"><path d="M6 5h8v10H6z" fill="#eef2f4" stroke="#777" /><circle cx="6" cy="5" r="4" fill="#18982c" /><path d="M6 3v2.500h2" stroke="#fff" /><path d="M9 12h5l3 4h-4z" fill="#dde4e8" stroke="#444" /></svg></button>
        <button class="tool big" aria-label="Más"><svg width="16" height="8" viewBox="0 0 16 8"><path d="M2 2h2v2H2zM7 2h2v2H7zM12 2h2v2h-2z" fill="#333" /><path d="M9 6h5l-2.500 2z" fill="#333" /></svg></button>
      </aside>

      <main class="charts">
        <section class="panel price">
          <svg class="plot" viewBox="23 18 1540 536" preserveAspectRatio="none">
            <g class="grid">
              <path v-for="g in gridX" :key="g[0]" :d="`M${g[0]} 20V554`" />
              <path v-for="(p, i) in prices" :key="p" :d="`M23 ${priceY(i)}H1563`" />
            </g>
            <polygon v-for="b in bands" :key="b.c" :points="b.p" :fill="b.c" />
            <rect x="23" y="30" width="94" height="63" fill="rgba(90,90,220,.2)" />
            <rect x="23" y="252" width="547" height="190" fill="rgba(100,255,100,.16)" />
            <rect x="23" y="442" width="547" height="112" fill="rgba(150,90,40,.19)" />
            <rect x="682" y="386" width="418" height="34" fill="rgba(90,90,220,.2)" />
            <rect x="682" y="420" width="418" height="42" fill="rgba(100,255,100,.16)" />
            <rect x="1294" y="266" width="212" height="37" fill="rgba(90,90,220,.2)" />
            <rect x="1294" y="303" width="212" height="47" fill="rgba(100,255,100,.16)" />
            <g class="faint"><path d="M23 340L117 396M483 548L690 297M703 287L1563 447M683 530L1130 207M1295 425L1506 107M1090 425L1109 330" /></g>
            <g class="fifty"><path d="M23 93H90M682 386H1100M1294 266H1506" /></g>
            <g class="sixty"><path d="M23 252H570M682 420H1100M1294 303H1506" /></g>
            <g class="seventy"><path d="M23 442H570M682 462H1100M1294 350H1506" /></g>
            <path v-for="(r, i) in fastFill" :key="i" :d="r.d" :fill="r.c" />
            <path :d="slowPath" class="slow" />
            <path v-for="(r, i) in fastRuns" :key="i" :d="r.d" :stroke="r.c" class="fast" />
            <g v-for="(c, i) in candles" :key="i">
              <path :d="`M${f(c.x)} ${f(c.high)}V${f(c.low)}`" stroke="#222" />
              <rect :x="c.x - 1.7" :y="c.top" width="3.400" :height="Math.max(c.bottom - c.top, 1)" :fill="c.fill" stroke="#111" stroke-width=".9" />
            </g>
            <polyline v-for="(l, i) in longAvg" :key="i" :points="poly(l.p)" :stroke="l.c" class="long" />
            <g class="gline"><path d="M23 348H1563M370 520H1563M900 256H1563M905 260L1563 184M462 383L1563 257" /><path d="M416 467L1563 334" stroke-dasharray="4 3" /></g>
            <path d="M23 215H1563" stroke="#008000" stroke-width="5" />
            <path d="M23 140H1563" stroke="#f00" stroke-width="2" />
            <path d="M1262 188H1563M606 251L1563 142M1185 125L1563 277" stroke="#ff2a2a" stroke-width="1.200" />
            <path d="M733 179H1563" stroke="#2424d8" stroke-dasharray="1 3" stroke-width="1.300" />
            <path d="M23 47L1234 259M23 547L62 554" stroke="#0a0aff" stroke-width="2.600" />
            <polyline class="zig" points="23,88 95,64 506,530 510,453 516,514 588,283 615,366 697,242 746,379 977,252 1049,422" />
            <ellipse cx="128" cy="87" rx="107" ry="51" class="er" />
            <ellipse cx="527" cy="513" rx="79" ry="52" class="er" />
            <ellipse cx="1404" cy="292" rx="93" ry="22" class="er" />
            <ellipse cx="1049" cy="389" rx="109" ry="36" class="eg" />
            <path class="dots" d="M1311 182L1353 256M1435 259L1507 116M1489 242L1563 163" />
            <path d="M1346 258l9-5 1 11zM1500 121l11-6-1 11z" fill="#000" />
            <g class="pct">
              <text x="56" y="91" class="t50">50,00 %</text><text x="282" y="250" class="t61">61,80 %</text><text x="282" y="439" class="t76">76,40 %</text>
              <text x="877" y="383" class="t50">50,00 %</text><text x="877" y="418" class="t61">61,80 %</text><text x="877" y="459" class="t76">76,40 %</text>
              <text x="1385" y="263" class="t50">50,00 %</text><text x="1385" y="301" class="t61">61,80 %</text><text x="1385" y="348" class="t76">76,40 %</text>
              <text x="1107" y="277" fill="#3ca03c">38,20 %</text>
            </g>
            <rect x="696" y="167" width="38" height="12" fill="#fff" stroke="#1414e0" stroke-width="1.300" /><text x="698" y="176" class="pctb">100,00 %</text>
            <rect x="23" y="202" width="32" height="13" fill="#fff" stroke="#0a800a" /><path d="M23 204h32" stroke="#7ab87a" stroke-width="2" /><text x="25" y="213" class="lvl">1,14300</text>
            <text x="31" y="49" class="title">W</text><text x="31" y="71" class="title">EUR/USD</text>
            <g v-for="(w, i) in waves" :key="'w' + i"><rect :x="w.x - 5" :y="w.y - 7" width="10" height="13" class="wbox" /><text :x="w.x" :y="w.y + 3" class="wtxt">{{ w.t }}</text></g>
            <g v-for="d in degrees" :key="d.t"><rect :x="d.x - 8" :y="d.y - 8" width="16" height="16" rx="2" class="dbox" /><text :x="d.x" :y="d.y + 3" class="dtxt">{{ d.t }}</text></g>
            <rect x="1311" y="117" width="119" height="16" rx="2" class="dbox solid" /><text x="1371" y="128" class="dtxt">STRUCTURE CONFIRMATION</text>
            <text x="25" y="552" class="src">IT-Finance.com - Tiempo Real</text>
          </svg>
          <nav class="tabs">
            <span class="tab ico">
              <svg width="30" height="10" viewBox="0 0 30 10"><path d="M.5 1h8v8h-8zM11 1h8v8h-8z" fill="#fff" stroke="#9ab" stroke-width=".5" /><path d="M4.500 2v4M2.500 5l2 2.500 2-2.500z" stroke="#e01818" fill="#e01818" /><path d="M15 8V4M13 5l2-2.500L17 5z" stroke="#18a828" fill="#18a828" /><circle cx="25" cy="5" r="4" fill="#3c6a94" /><path d="M23.500 3.500l3 3M26.500 3.500l-3 3" stroke="#fff" /></svg>
            </span>
            <label class="tab"><input type="checkbox" class="tick" />Precio</label>
            <button class="tab" aria-label="Lista"><svg width="8" height="8" viewBox="0 0 8 8"><path d="M0 1h1.500M0 4h1.500M0 7h1.500M3 1h5M3 4h5M3 7h5" stroke="#222" /></svg></button>
            <label class="tab"><input type="checkbox" class="tick" />Cierre (W)</label>
            <button class="tab"><i class="sq"></i>Tunel Domenec v4 (t t t t t)</button>
            <button class="tab"><i class="sq multi"></i>Control Total Doc v.6</button>
          </nav>
          <svg class="axis" viewBox="1564 18 36 536" preserveAspectRatio="none">
            <g v-for="(p, i) in prices" :key="p"><path :d="`M1564 ${priceY(i)}h3`" stroke="#667" /><text v-if="p !== '1,16'" x="1569" :y="priceY(i) + 3">{{ p }}</text></g>
            <rect x="1568" y="167" width="31" height="9" class="tag" /><text x="1569" y="175" fill="#a01010">1,16763</text>
            <rect x="1568" y="174" width="31" height="9" class="tag" /><text x="1569" y="182" fill="#0000c0">1,16554</text>
            <rect x="1568" y="180" width="31" height="10" class="tag" /><text x="1569" y="188" fill="#a01010">1,16516</text>
          </svg>
        </section>

        <section class="panel trains">
          <svg class="plot" viewBox="23 554 1540 97" preserveAspectRatio="none">
            <g class="grid"><path v-for="g in gridX" :key="g[0]" :d="`M${g[0]} 554V651`" /><path d="M23 579H1563M23 596H1563M23 613H1563M23 629H1563" /></g>
            <rect x="23" y="563" width="1304" height="16" fill="#d8f5d6" /><rect x="23" y="630" width="1304" height="16" fill="#fdd9d7" />
            <path :d="trainHigh" fill="rgba(20,130,40,.45)" /><path :d="trainLow" fill="rgba(140,40,20,.5)" />
            <path v-for="(r, i) in trainFill" :key="i" :d="r.d" :fill="r.c" />
            <path d="M23 562H1327M23 579H1327M23 630H1327M23 646H1327" stroke="#222" />
            <path d="M23 604H1327" stroke="#0000a8" stroke-width="1.300" stroke-dasharray="4 3" />
            <path v-for="(r, i) in oscRuns" :key="i" :d="r.d" :stroke="r.c" class="osc" /><path :d="oscLagPath" class="osclag" />
            <path v-for="(r, i) in trainRuns" :key="i" :d="r.d" :stroke="r.c" class="train" /><path :d="trainLagPath" class="trainlag" />
            <path :d="trainDown" fill="#a80808" /><path :d="trainUp" fill="#0000c0" />
          </svg>
          <div class="tabs"><button class="tab x" aria-label="Cerrar panel">✕</button><button class="tab"><i class="sq half"></i>Sistema de trenes Doc v4 (f f)</button></div>
          <svg class="axis" viewBox="1564 554 36 97" preserveAspectRatio="none">
            <path d="M1564 562h3M1564 579h3M1564 596h3M1564 613h3M1564 629h3M1564 646h3" stroke="#667" />
            <text x="1569" y="598">60</text><text x="1569" y="616">40</text><text x="1569" y="627">20</text>
            <rect x="1568" y="568" width="26" height="10" class="tag" /><text x="1580" y="577">,281</text>
            <rect x="1567" y="557" width="15" height="10" class="tag" /><text x="1568" y="565">100</text>
            <rect x="1567" y="574" width="10" height="10" class="tag" /><text x="1568" y="582">80</text>
            <rect x="1567" y="583" width="28" height="10" class="tag" /><text x="1569" y="591" fill="#e01010">71,235</text>
            <rect x="1567" y="600" width="10" height="10" class="tag" /><text x="1568" y="608" fill="#0000c0">50</text>
            <rect x="1567" y="630" width="28" height="10" class="tag" /><text x="1569" y="638" fill="#e01010">13,433</text>
            <rect x="1567" y="641" width="6" height="9" class="tag" /><text x="1568" y="648">0</text>
          </svg>
        </section>

        <section class="panel willy">
          <svg class="plot" viewBox="23 651 1540 68" preserveAspectRatio="none">
            <g class="grid"><path v-for="g in gridX" :key="g[0]" :d="`M${g[0]} 651V719`" /></g>
            <rect v-for="(s, i) in willyStripes" :key="i" :x="s.x" y="651" :width="s.w" height="68" :fill="s.c" />
            <path :d="willyHigh" fill="rgba(50,160,60,.42)" /><path :d="willyLow" fill="rgba(110,10,20,.45)" />
            <path d="M23 657H1327M23 716H1327" stroke="#222" stroke-dasharray="4 3" />
            <path d="M23 672H1327" stroke="#000090" stroke-width="1.300" /><path d="M23 686H1327" stroke="#0000a8" stroke-dasharray="4 3" stroke-width="1.300" /><path d="M23 702H1327" stroke="#c00000" stroke-width="1.300" />
            <path v-for="(r, i) in willyRuns" :key="i" :d="r.d" :stroke="r.c" class="train" />
            <path :d="willyDown" fill="#a80808" /><path :d="willyUp" fill="#0000c0" />
          </svg>
          <div class="tabs"><button class="tab x" aria-label="Cerrar panel">✕</button><button class="tab"><i class="sq"></i>Willy Doc (t)</button></div>
          <svg class="axis" viewBox="1564 651 36 68" preserveAspectRatio="none">
            <path d="M1564 657h3M1564 672h3M1564 686h3M1564 702h3M1564 716h3" stroke="#667" />
            <text x="1569" y="669">-20</text><text x="1569" y="682">-40</text>
            <rect x="1567" y="652" width="6" height="10" class="tag" /><text x="1568" y="660">0</text>
            <rect x="1567" y="667" width="13" height="9" class="tag" /><text x="1568" y="674" fill="#0000a0">-25</text>
            <rect x="1567" y="682" width="13" height="9" class="tag" /><text x="1568" y="689" fill="#0000a0">-50</text>
            <rect x="1567" y="693" width="29" height="10" class="tag" /><text x="1582" y="701" fill="#0000e0">218</text>
            <rect x="1567" y="697" width="13" height="9" class="tag" /><text x="1568" y="704" fill="#c01010">-75</text>
            <rect x="1567" y="709" width="18" height="9" class="tag" /><text x="1568" y="716">-100</text>
          </svg>
        </section>

        <section class="panel awesome">
          <svg class="plot" viewBox="23 719 1540 64" preserveAspectRatio="none">
            <g class="grid"><path v-for="g in gridX" :key="g[0]" :d="`M${g[0]} 719V783`" /><path d="M23 735H1563M23 774H1563" /></g>
            <path v-for="h in hatch" :key="h.x" :d="`M${f(h.x)} ${f(h.y1)}V${f(h.y2)}`" :stroke="h.y2 < h.y1 ? '#ffb0b0' : '#b8f8c0'" stroke-width="1.300" />
            <rect v-for="b in histo" :key="b.x" :x="b.x" :y="b.y" width="3" :height="b.h" :fill="b.c" />
            <path d="M23 755H1327" stroke="#0000f0" stroke-width="1.500" />
            <path v-for="(r, i) in macdRuns" :key="'m' + i" :d="r.d" :stroke="r.c" class="aw" />
            <path v-for="(r, i) in sigRuns" :key="'s' + i" :d="r.d" :stroke="r.c" class="aw" />
            <path :d="awDown" fill="#fff000" /><path :d="awUp" fill="#00f0ff" />
          </svg>
          <div class="tabs"><button class="tab x" aria-label="Cerrar panel">✕</button><button class="tab"><i class="sq"></i>Awesome Evolution Doc</button></div>
          <svg class="axis" viewBox="1564 719 36 64" preserveAspectRatio="none">
            <path d="M1564 735h3M1564 774h3" stroke="#667" /><path d="M1564 755h3M1564 763h3" stroke="#e01010" />
            <text x="1569" y="738">0,05</text><text x="1569" y="777">-0,05</text>
            <rect x="1567" y="744" width="6" height="9" class="tag" /><text x="1568" y="751" fill="#0000e0">0</text>
            <rect x="1567" y="751" width="29" height="9" class="tag" /><text x="1568" y="758" fill="#ff9400">-0,0016</text>
            <rect x="1567" y="757" width="29" height="9" class="tag" /><text x="1568" y="765" fill="#b400b4">-0,0209</text>
            <rect x="1567" y="763" width="29" height="10" class="tag" /><text x="1568" y="771" fill="#e01010">-0,0209</text>
          </svg>
        </section>

        <section class="panel barra">
          <svg class="plot" viewBox="23 783 1540 47" preserveAspectRatio="none">
            <g class="grid"><path v-for="g in gridX" :key="g[0]" :d="`M${g[0]} 783V830`" /></g>
            <rect x="23" y="784" width="1305" height="46" fill="#fffc88" />
            <rect x="23" y="811" width="1305" height="19" fill="rgba(120,110,90,.32)" />
            <rect v-for="(s, i) in fondo" :key="i" :x="s.x" y="784" :width="s.w" height="46" :fill="s.c" />
            <rect v-for="b in forceBars" :key="b.x" :x="b.x" :y="b.y" width="4.525" :height="830 - b.y" :fill="b.c" stroke="rgba(40,0,60,.32)" stroke-width=".8" />
            <path d="M23 811H1327" stroke="#222" />
          </svg>
          <div class="tabs"><button class="tab x" aria-label="Cerrar panel">✕</button><button class="tab"><i class="sq half"></i>Barra Fuerza Fondo Mercado v4 (f)</button></div>
          <svg class="axis" viewBox="1564 783 36 47" preserveAspectRatio="none">
            <path d="M1564 788h3M1564 800h3M1564 811h3" stroke="#667" />
            <text x="1569" y="791">0,50004</text><text x="1569" y="802">0,50002</text><text x="1569" y="826">0,49998</text>
            <rect x="1567" y="802" width="31" height="10" class="tag" /><text x="1569" y="810">0,50000</text>
            <rect x="1567" y="813" width="31" height="10" class="tag" /><text x="1569" y="821" fill="#0000e0">0,50000</text>
          </svg>
        </section>
        <svg class="time" viewBox="23 830 1577 13" preserveAspectRatio="none"><path d="M23 830.500H1563" stroke="#777" /><text v-for="g in gridX" :key="g[0]" :x="g[0]" y="841">{{ g[1] }}</text></svg>
      </main>
    </div>

    <footer class="foot">
      <button class="f" aria-label="Dibujo"><svg viewBox="0 0 14 14"><path d="M2 3l4 4 1 5 2-6 4-4" fill="none" stroke="#2a8a30" stroke-width="1.500" /><path d="M3 13l9-10" stroke="#f0a020" stroke-width="2" /><path d="M1 10l3 3" stroke="#c02020" stroke-width="2" /></svg></button>
      <button class="f" aria-label="Compartir"><svg viewBox="0 0 14 14"><path d="M11 3L4 7l7 4" fill="none" stroke="#eef" stroke-width="1.500" /><circle cx="11" cy="3" r="2" fill="#eef" /><circle cx="3" cy="7" r="2" fill="#eef" /><circle cx="11" cy="11" r="2" fill="#eef" /></svg></button>
      <button class="f" aria-label="Chat"><svg viewBox="0 0 14 14"><path d="M1 2h8v6H1z" fill="#6a9ae8" /><path d="M4 5h9v6H8l-3 3v-3H4z" fill="#3a78dc" /><path d="M6 8h5" stroke="#fff" stroke-dasharray="1 1" /></svg></button>
      <button class="f" aria-label="Órdenes"><svg viewBox="0 0 14 14"><path d="M3 1h9v12H3z" fill="#e8ecee" stroke="#777" /><path d="M5 4h4v3H5z" fill="#e02828" /><path d="M6 9h4v3H6z" fill="#28a838" /></svg></button>
      <button class="f" aria-label="Libro"><svg viewBox="0 0 14 14"><path d="M1 1h6v2H1zM3 4h4v2H3zM1 7h6v2H1zM2 10h5v2H2z" fill="#18a828" /><path d="M7 1h4v2H7zM7 4h6v2H7zM7 7h5v2H7zM7 10h6v2H7z" fill="#e02828" /></svg></button>
      <button class="f" aria-label="Ventanas"><svg viewBox="0 0 14 14"><path d="M1 1h9v7H1z" fill="#fff" stroke="#3a78dc" /><path d="M4 5h9v7H4z" fill="#fff" stroke="#3a78dc" /><path d="M5 10l3-3 2 2 2-2" fill="none" stroke="#18a828" /></svg></button>
      <span class="lt">«</span>
      <button class="sb" aria-label="Izquierda">‹</button>
      <div class="track"><div class="thumb"></div></div>
      <button class="sb" aria-label="Derecha">›</button>
      <div class="right">
        <button class="f" aria-label="Deshacer"><svg viewBox="0 0 14 14"><path d="M5 2L2 5l3 3M2 5h6q4 0 3 6" fill="none" stroke="#5f9ad0" stroke-width="1.800" /></svg></button>
        <button class="f" aria-label="Rehacer"><svg viewBox="0 0 14 14"><path d="M9 2l3 3-3 3M12 5H6Q2 5 3 11" fill="none" stroke="#7fb2d4" stroke-width="1.800" /></svg></button>
        <button class="f" aria-label="Ajustes"><svg viewBox="0 0 14 14"><path d="M2 12l6-6" stroke="#c02828" stroke-width="3" /><circle cx="10" cy="4" r="3" fill="none" stroke="#28a028" stroke-width="1.500" /><path d="M8 8h4v5H8z" fill="#28a028" /></svg></button>
        <button class="f" aria-label="Autoescala"><svg viewBox="0 0 14 14"><circle cx="6" cy="5" r="3.500" fill="#eef" stroke="#222" /><path d="M8 8l3 4" stroke="#222" stroke-width="2" /><path d="M12.500 1v8M1 12h6" stroke="#1830e0" stroke-dasharray="2 1" /></svg></button>
        <button class="f" aria-label="Alejar"><svg viewBox="0 0 14 14"><circle cx="6" cy="5" r="4" fill="#fff" stroke="#224" /><path d="M4 5h4" stroke="#1830e0" stroke-width="1.500" /><path d="M9 8l4 5" stroke="#222" stroke-width="2" /></svg></button>
        <button class="f" aria-label="Acercar"><svg viewBox="0 0 14 14"><circle cx="6" cy="5" r="4" fill="#fff" stroke="#224" /><path d="M4 5h4M6 3v4" stroke="#1830e0" stroke-width="1.500" /><path d="M9 8l4 5" stroke="#222" stroke-width="2" /></svg></button>
        <button class="f" aria-label="Escala"><svg viewBox="0 0 14 14"><path d="M1 3h12M1 5h12" stroke="#333" stroke-dasharray="2 1" /><path d="M7 6v6M5 10l2 2 2-2" stroke="#1870e0" fill="none" /></svg></button>
      </div>
    </footer>
  </div>
</template>

<style>
body { margin: 0; background: #fff; }
</style>

<style scoped>
.app { display: flex; flex-direction: column; height: 100vh; min-height: 500px; overflow: hidden; font: bold 8px/10px "Liberation Sans", Arial, sans-serif; color: #111; }
button { font: inherit; color: inherit; border: 0; padding: 0; margin: 0; background: none; }
.bar { display: flex; align-items: center; height: 16px; flex: none; background: linear-gradient(#b8d8e4, #9dbdca); border-bottom: 2px solid #5c7888; white-space: nowrap; }
.flat { display: flex; align-items: center; gap: 3px; }
.bar > .flat:first-child { margin-left: 3px; }
.grip { margin: 0 7px 0 6px; }
.drop { display: flex; align-items: center; gap: 5px; }
.chev { width: 6px; height: 4px; fill: none; stroke: #333; stroke-width: 1; }
.symbol { width: 51px; }
.group { display: flex; gap: 3px; }
.pill { height: 13px; padding: 0 1px; border: 1px solid #7797a5; border-radius: 2px; background: #accbd7; line-height: 10px; min-width: 11px; }
.pill.on { background: #8ba2ac; border-color: #6d8791; }
.week { margin: 0 8px; }
.units { margin: 0 7px; }
.ind { height: 16px; padding-right: 3px; }
.split { width: 12px; height: 16px; border-left: 1px solid #7797a5; border-right: 1px solid #7797a5; margin-right: 7px; }
.info { width: 8px; height: 8px; background: #eee; border-radius: 1px; color: #999; text-align: center; line-height: 8px; margin-right: 7px; }
.dot { width: 6px; height: 6px; border-radius: 3px; background: #888; margin-right: 4px; }
.chg { background: #f04a4a; color: #fff; border-radius: 2px; padding: 1px 2px; font-weight: normal; margin-right: 3px; }
.date { margin-right: 3px; }
.pair { background: #5cb8ea; border: 1px solid #48a0d2; border-radius: 4px; padding: 0 2px; font-weight: normal; }
.grow { flex: 1; }
.sync { width: 17px; height: 16px; border-left: 1px solid #7797a5; border-right: 1px solid #7797a5; margin-right: 3px; }
.win { width: 12px; height: 16px; }
.win svg { stroke: #75868f; stroke-width: 1.3; }
.work { display: flex; flex: 1; min-height: 0; }
.tools { display: flex; flex-direction: column; width: 20px; flex: none; background: #a0bdca; border-left: 1px solid #4f6b7c; border-right: 2px solid #8ea9b6; }
.fold { height: 10px; flex: none; background: #93aebb; display: flex; justify-content: center; align-items: center; }
.fold svg { width: 6px; height: 4px; fill: none; stroke: #444; }
.low { background: #b6d2dd; }
.stack { display: flex; flex-direction: column; flex: 1; min-height: 0; padding-bottom: 6px; }
.tool { flex: 1; min-height: 0; display: flex; align-items: center; justify-content: center; overflow: hidden; }
.tool.on { background: #8ba1ab; border: 1px solid #708791; border-radius: 2px; }
.tool.big { flex: none; height: 22px; }
.tiny { font: bold 8px "Liberation Sans", Arial, sans-serif; }
.charts { flex: 1; min-width: 0; display: grid; grid-template-columns: minmax(0, 1fr); grid-template-rows: minmax(0, 536fr) minmax(0, 97fr) minmax(0, 68fr) minmax(0, 64fr) minmax(0, 47fr) 13px; }
.panel { position: relative; display: flex; min-height: 0; }
.panel + .panel { box-shadow: 0 -1px 0 #7a929e; }
.plot { flex: 1540 1 0; min-width: 0; width: 0; height: 100%; border-right: 1px solid #5f7683; fill: none; overflow: hidden; }
.axis { flex: 36 1 0; min-width: 0; width: 0; height: 100%; overflow: hidden; }
.axis text { font: bold 8px "Liberation Sans", Arial, sans-serif; }
.tag { fill: #fff; stroke: #78909c; stroke-width: 1; }
.time { height: 13px; width: 100%; }
.time text { font: bold 8px "Liberation Sans", Arial, sans-serif; text-anchor: middle; }
.grid path { stroke: #e4e4e4; stroke-dasharray: 1 3; }
.tabs { position: absolute; top: 0; left: 0; display: flex; height: 12px; }
.tab { display: flex; align-items: center; gap: 3px; height: 12px; box-sizing: border-box; padding: 0 2px; background: #cfdee4; border: 1px solid #93a9b3; border-top-color: #e2edf1; border-left-color: #e2edf1; white-space: nowrap; }
.tab.x { width: 13px; justify-content: center; padding: 0; color: #fff; font-size: 6px; background: radial-gradient(circle, #3c6a94 4px, #cfdee4 5px); }
.tick { appearance: none; width: 7px; height: 7px; margin: 0; border: 1px solid #8b9ca4; background: #dfe9ed; }
.sq { width: 7px; height: 7px; background: #78909a; }
.half { background: linear-gradient(90deg, #8fa2ab 40%, #000 40%); }
.multi { background: linear-gradient(90deg, #10d040 25%, #222 25% 50%, #f01060 50% 75%, #1ad0e0 75%); }
.faint { stroke: #cfcfcf; stroke-dasharray: 1 3; }
.fifty { stroke: #ff9055; stroke-dasharray: 1 2; }
.sixty { stroke: #4a4ae0; stroke-dasharray: 17 7; stroke-width: 1.2; }
.seventy { stroke: #8cf58c; stroke-dasharray: 17 7; stroke-width: 1.3; }
.slow { stroke: #a81818; stroke-width: 1.4; stroke-dasharray: 3 3; }
.fast { stroke-width: 2.6; stroke-linecap: round; }
.long { stroke-width: 3; stroke-dasharray: 6 5; }
.gline { stroke: #2ab02a; }
.zig { stroke: #6aa0ff; }
.er { fill: rgba(240, 40, 50, .2); stroke: rgba(230, 80, 80, .4); }
.eg { fill: rgba(40, 140, 50, .2); stroke: rgba(60, 150, 70, .35); }
.dots { stroke: #000; stroke-width: 1.8; stroke-dasharray: 2 4; }
.pct text, .pctb, .lvl { font: bold 8px "Liberation Sans", Arial, sans-serif; }
.t50 { fill: #ff8040; }
.t61 { fill: #3c3cd8; }
.t76 { fill: #62e662; }
.pctb { fill: #1414d0; }
.lvl { fill: #0a700a; }
.title { font: bold 20px "Liberation Sans", Arial, sans-serif; fill: #160a24; }
.wbox { fill: #fff; stroke: #80a8f0; stroke-width: 1.2; }
.wtxt { font: bold 9px "Liberation Sans", Arial, sans-serif; fill: #5c90f0; text-anchor: middle; }
.dbox { fill: rgba(255, 255, 255, .2); stroke: #80acff; stroke-width: 1.2; }
.solid { fill: #fff; }
.dtxt { font: 8px "Liberation Sans", Arial, sans-serif; fill: #111; text-anchor: middle; }
.src { font: 8px "Liberation Sans", Arial, sans-serif; fill: #111; }
.osc { stroke-width: 1.3; }
.osclag { stroke: #3a5a40; stroke-dasharray: 2 2; stroke-width: .8; }
.train { stroke-width: 2.6; }
.trainlag { stroke: #111; stroke-width: 2; stroke-dasharray: 4 4; }
.aw { stroke-width: 2.4; }
.foot { display: flex; align-items: center; gap: 3px; height: 15px; box-sizing: border-box; flex: none; padding-left: 5px; background: #9dbbc8; border-top: 1px solid #5c7888; }
.f { width: 14px; height: 14px; flex: none; }
.f:first-child { margin-right: 4px; }
.f svg { width: 13px; height: 13px; display: block; }
.lt { font-size: 12px; font-weight: normal; margin-left: 1px; }
.sb { width: 10px; height: 11px; border: 1px solid #76929f; background: #b5d0da; line-height: 8px; font-size: 10px; margin-left: 1px; }
.track { flex: 1; display: flex; justify-content: flex-end; height: 11px; background: #91b0be; border: 1px solid #7d9aa8; box-sizing: border-box; }
.thumb { width: 14%; background: #b0d0dc; border-left: 1px solid #789; }
.right { display: flex; gap: 4px; margin-left: 2px; }
.right .f { margin: 0; }
</style>
